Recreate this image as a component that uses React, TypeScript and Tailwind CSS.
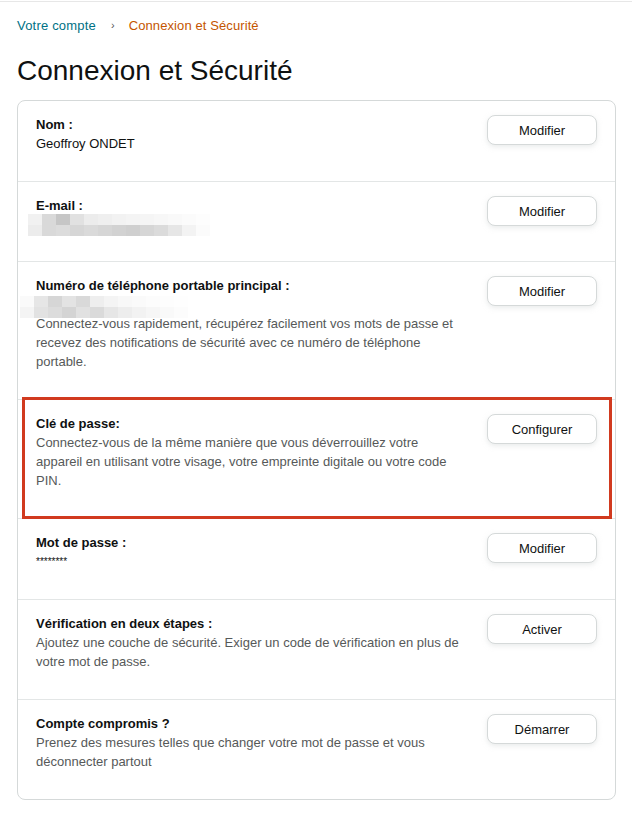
import { ReactNode } from 'react';

const emailBlur = [
  ['#f1f1f1', '#d9d9d9', '#c6c6c6', '#e1e1e1', '#ececec', '#efefef', '#f2f2f2', '#f4f4f4', '#f5f5f5', '#f7f7f7', '#f9f9f9', '#fbfbfb', '#fdfdfd'],
  ['#ececec', '#d9d9d9', '#dcdcdc', '#d6d6d6', '#dadada', '#d6d6d6', '#d2d2d2', '#cfcfcf', '#d6d6d6', '#dbdbdb', '#e6e6e6', '#f3f3f3', '#fbfbfb'],
];

const phoneBlur = [
  ['#fafafa', '#e6e6e6', '#d6d6d6', '#e3e3e3', '#d9d9d9', '#eeeeee', '#f4f4f4', '#f8f8f8', '#fafafa', '#fcfcfc', '#fdfdfd', '#fefefe'],
  ['#f4f4f4', '#e2e2e2', '#dcdcdc', '#d4d4d4', '#e1e1e1', '#dadada', '#e6e6e6', '#ededed', '#f2f2f2', '#f6f6f6', '#f9f9f9', '#fcfcfc'],
];

function Pixelated({ grid, cell }: { grid: string[][]; cell: string }) {
  return (
    <div className="flex flex-col">
      {grid.map((row, i) => (
        <div key={i} className="flex">
          {row.map((c, j) => (
            <div key={j} className={cell} style={{ backgroundColor: c }} />
          ))}
        </div>
      ))}
    </div>
  );
}

interface RowProps {
  label: string;
  action: string;
  children?: ReactNode;
  last?: boolean;
  highlight?: boolean;
}

function Row({ label, action, children, last, highlight }: RowProps) {
  return (
    <div className={`relative flex items-start justify-between px-[18px] pt-[14px] pb-[28px] ${last ? '' : 'border-b border-[#e3e6e6]'}`}>
      <div className="w-[432px]">
        <div className="font-bold text-[#0f1111]">{label}</div>
        {children}
      </div>
      <button className="w-[110px] h-[30px] shrink-0 rounded-lg border border-[#d5d9d9] bg-white text-[13px] text-[#0f1111] shadow-[0_2px_5px_0_rgba(213,217,217,0.5)]">
        {action}
      </button>
      {highlight && (
        <div className="pointer-events-none absolute left-[4px] right-[3px] top-[-3px] bottom-[-1px] border-[3px] border-[#d13a1f]" />
      )}
    </div>
  );
}

export default function App() {
  return (
    <div className="min-h-[813px] bg-white font-['Liberation_Sans',Arial,sans-serif] text-[13px] leading-[19px] text-[#0f1111]">
      <div className="h-px mt-px bg-[#e7e7e7]" />
      <div className="pl-[17px] pr-[16px]">
        <nav className="mt-[14px] flex items-center">
          <a className="text-[#007185] tracking-[0.2px]">Votre compte</a>
          <span className="ml-[15px] mr-[14px] text-[11px] text-[#555]">›</span>
          <span className="text-[#c45500] tracking-[0.1px]">Connexion et Sécurité</span>
        </nav>
        <h1 className="mt-[18px] text-[28px] leading-[36px] font-normal">Connexion et Sécurité</h1>
        <div className="mt-[11px] rounded-lg border border-[#d5d9d9]">
          <Row label="Nom :" action="Modifier">
            <div>Geoffroy ONDET</div>
          </Row>
          <Row label="E-mail :" action="Modifier">
            <div className="h-[19px] -ml-[8px] -mt-px">
              <Pixelated grid={emailBlur} cell="w-[14px] h-[11px]" />
            </div>
          </Row>
          <Row label="Numéro de téléphone portable principal :" action="Modifier">
            <div className="h-[19px] -ml-[16px] pt-px">
              <Pixelated grid={phoneBlur} cell="w-[14px] h-[11px]" />
            </div>
            <div className="text-[#565959]">
              Connectez-vous rapidement, récupérez facilement vos mots de passe et recevez des notifications de sécurité avec ce numéro de téléphone portable.
            </div>
          </Row>
          <Row label="Clé de passe:" action="Configurer" highlight>
            <div className="text-[#565959]">
              Connectez-vous de la même manière que vous déverrouillez votre appareil en utilisant votre visage, votre empreinte digitale ou votre code PIN.
            </div>
          </Row>
          <Row label="Mot de passe :" action="Modifier">
            <div className="text-[10px]">********</div>
          </Row>
          <Row label="Vérification en deux étapes :" action="Activer">
            <div className="text-[#565959]">
              Ajoutez une couche de sécurité. Exiger un code de vérification en plus de votre mot de passe.
            </div>
          </Row>
          <Row label="Compte compromis ?" action="Démarrer" last>
            <div className="text-[#565959]">
              Prenez des mesures telles que changer votre mot de passe et vous déconnecter partout
            </div>
          </Row>
        </div>
      </div>
    </div>
  );
}
